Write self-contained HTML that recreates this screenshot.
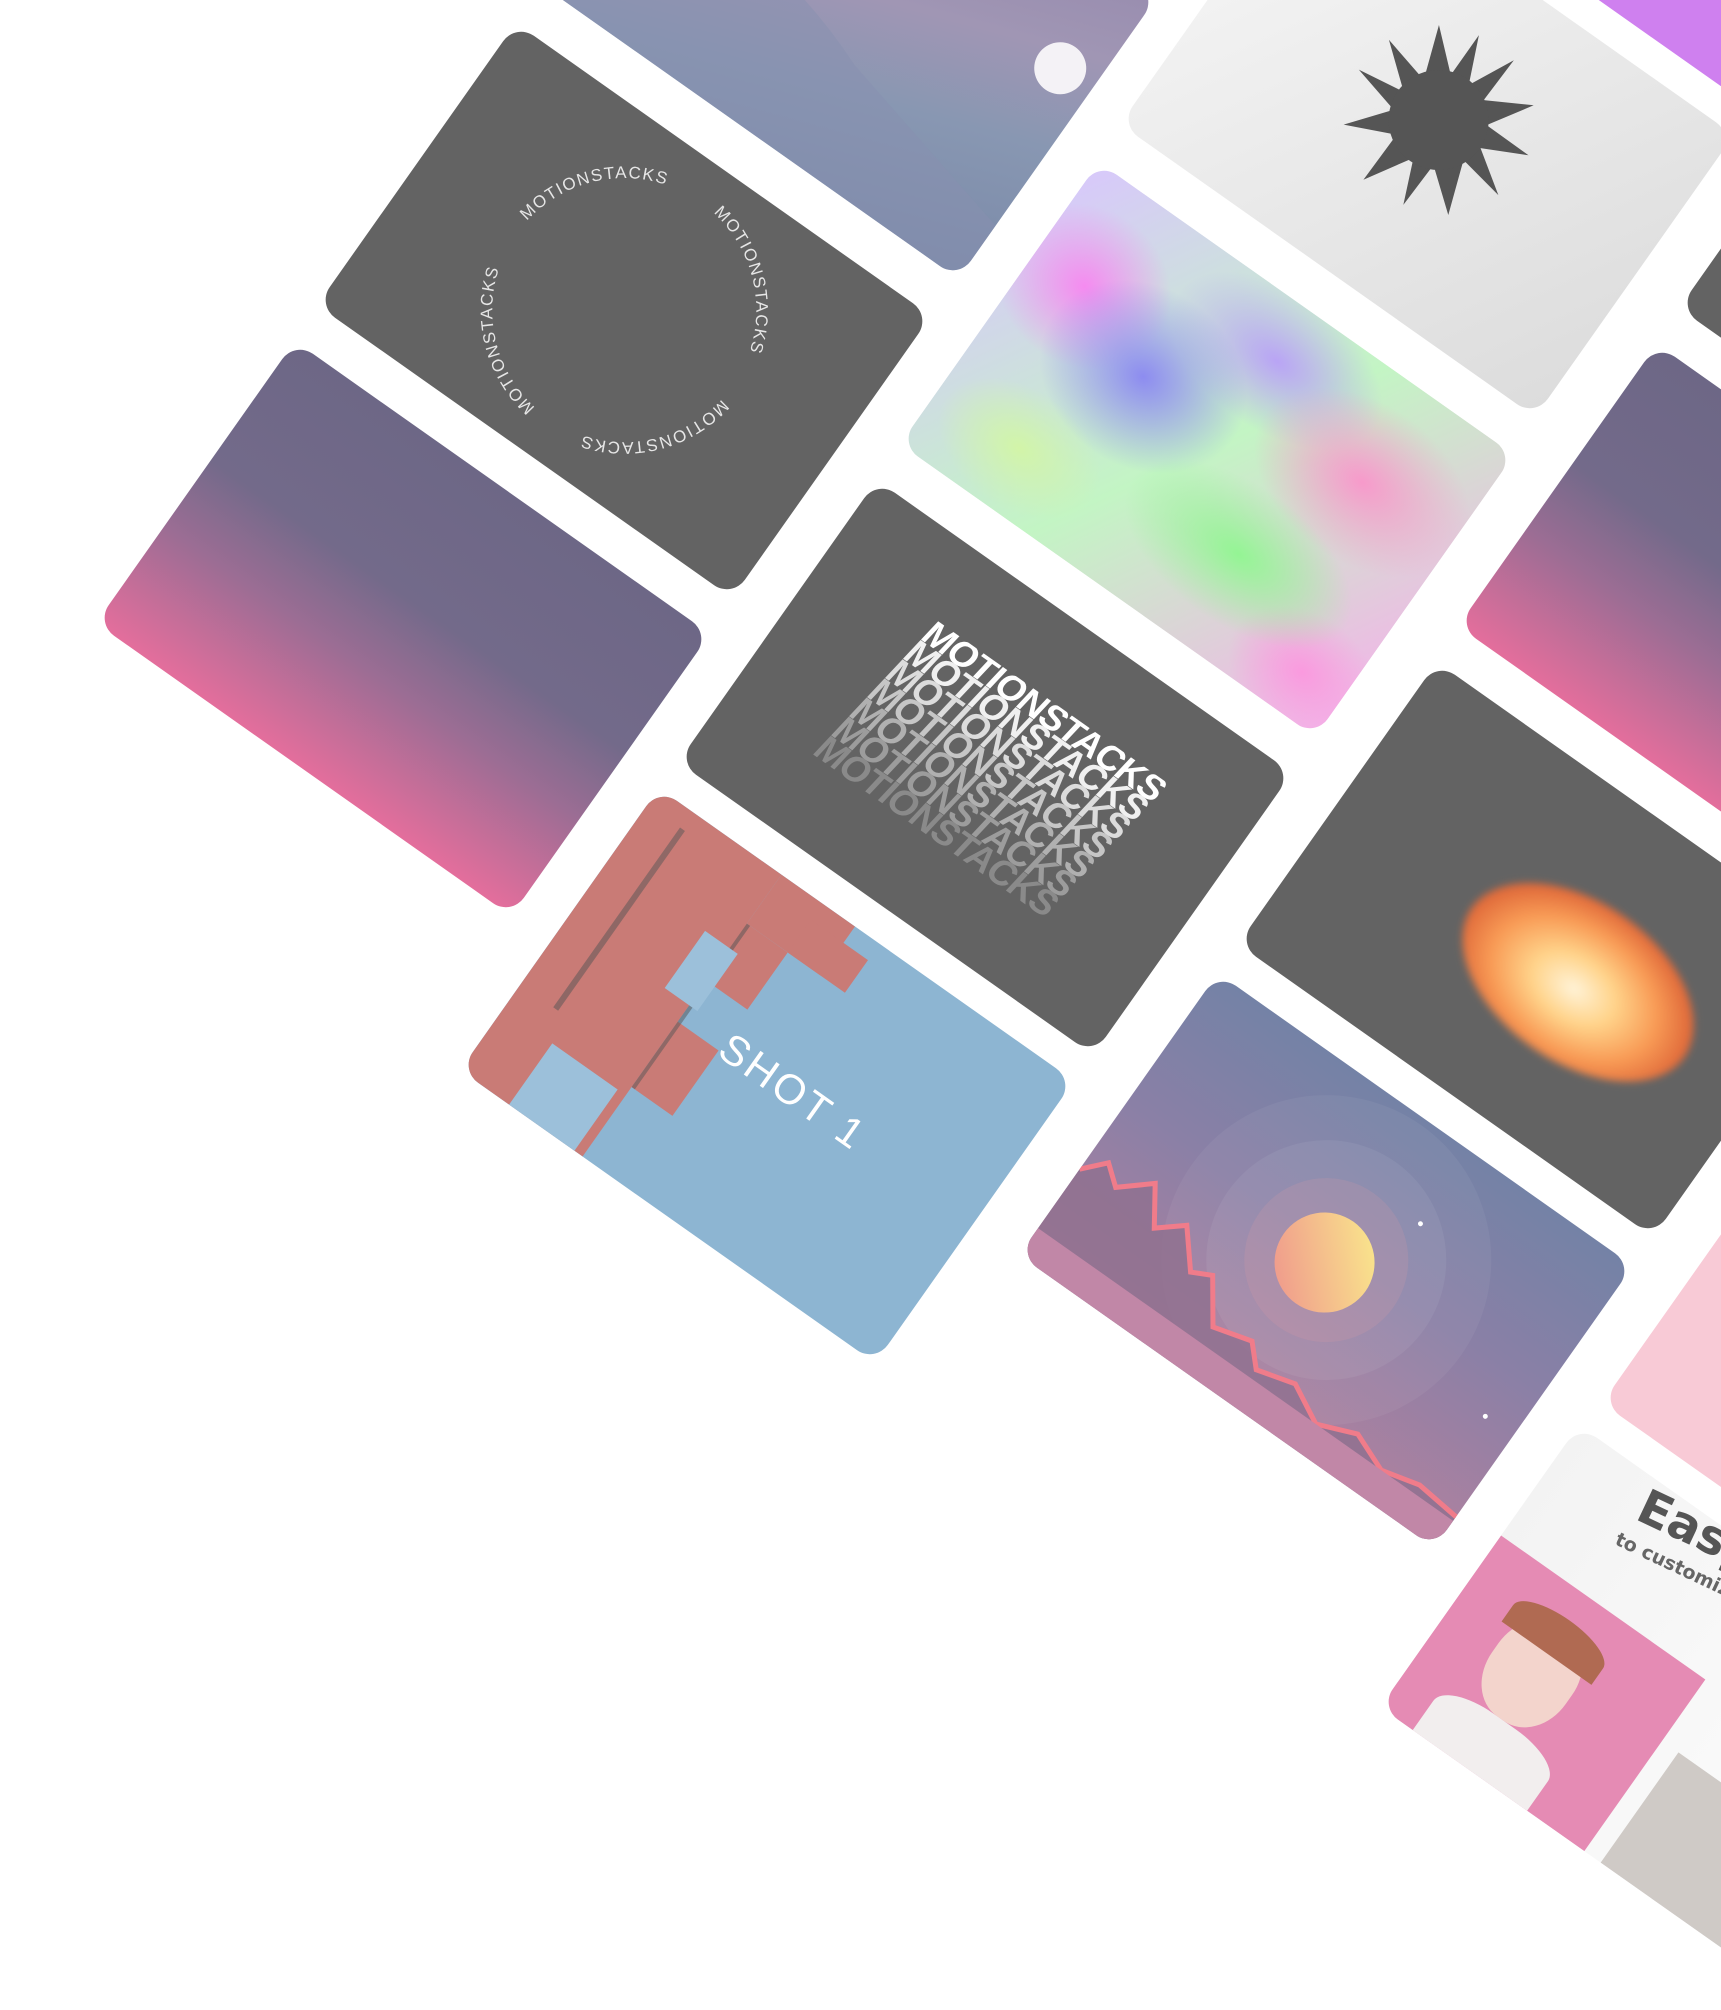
<!DOCTYPE html>
<html><head><meta charset="utf-8"><style>
html,body{margin:0;padding:0;width:1721px;height:2010px;overflow:hidden;background:#fff;font-family:"Liberation Sans",sans-serif}
.c{position:absolute;width:508px;height:345px;margin:-172.5px 0 0 -254px;transform:rotate(35.2deg);border-radius:22px;overflow:hidden}
.c svg{position:absolute;left:0;top:0;width:508px;height:345px}
.dark{background:#636363}
.pg{background:linear-gradient(180deg,#6d6786 0%,#736a8a 42%,#9c6d94 66%,#e46e9c 100%)}
</style></head><body>

<div class="c" style="left:850px;top:-9px;background:linear-gradient(160deg,#8a7aa6 0%,#a096b4 50%,#8897b2 70%,#7a89a8 100%)">
<svg viewBox="0 0 508 345"><path d="M0 210 Q150 170 300 230 L508 280 L508 345 L0 345Z" fill="#8790b0" opacity=".5"/><circle cx="470" cy="114" r="26" fill="#f4f2f6"/></svg></div>

<div class="c dark" style="left:624px;top:310px">
<svg viewBox="0 0 508 345"><defs><path id="cp" d="M254,172 m-132,0 a132,132 0 1,1 264,0 a132,132 0 1,1 -264,0"/></defs>
<g font-family="Liberation Sans" font-size="17" fill="#e6e6e6" letter-spacing="1.5">
<text><textPath href="#cp" startOffset="2%">MOTIONSTACKS</textPath></text>
<text><textPath href="#cp" startOffset="27%">MOTIONSTACKS</textPath></text>
<text><textPath href="#cp" startOffset="52%">MOTIONSTACKS</textPath></text>
<text><textPath href="#cp" startOffset="77%">MOTIONSTACKS</textPath></text></g></svg></div>

<div class="c pg" style="left:403px;top:628px"></div>

<div class="c dark" style="left:985px;top:767px">
<div style="position:absolute;left:115px;top:80px;width:300px;height:200px;overflow:hidden;transform:skewX(-8deg);font-weight:bold;font-size:37px;line-height:26px;letter-spacing:-1px">
<div style="color:#fff">MOTIONSTACKS</div><div style="color:#f0f0f0">MOTIONSTACKS</div><div style="color:#dcdcdc">MOTIONSTACKS</div><div style="color:#c6c6c6">MOTIONSTACKS</div><div style="color:#b0b0b0">MOTIONSTACKS</div><div style="color:#9c9c9c">MOTIONSTACKS</div><div style="color:#8a8a8a">MOTIONSTACKS</div>
</div></div>

<div class="c" style="left:767px;top:1075px;background:#8db5d2">
<svg viewBox="0 0 508 345"><g fill="#c97b76"><rect x="0" y="0" width="150" height="345"/><rect x="150" y="0" width="90" height="60"/><rect x="140" y="60" width="60" height="70"/><rect x="150" y="180" width="50" height="80"/><rect x="200" y="20" width="70" height="40"/></g>
<g fill="#555" opacity=".5"><rect x="40" y="20" width="6" height="220"/><rect x="150" y="60" width="4" height="200"/></g>
<g fill="#9cc0da"><rect x="120" y="90" width="40" height="70"/><rect x="60" y="270" width="80" height="78"/></g>
<text x="200" y="185" font-size="42" fill="#fff" font-family="Liberation Sans" letter-spacing="3">SHOT 1</text></svg></div>

<div class="c" style="left:1207px;top:449px;background:
radial-gradient(ellipse 110px 90px at 160px 150px,#8d8cf0,transparent),
radial-gradient(ellipse 130px 70px at 340px 240px,#94f594,transparent),
radial-gradient(ellipse 120px 80px at 400px 110px,#f79acb,transparent),
radial-gradient(ellipse 90px 80px at 60px 110px,#f58bf0,transparent),
radial-gradient(ellipse 120px 70px at 260px 60px,#b9a4f5,transparent),
radial-gradient(ellipse 90px 60px at 100px 280px,#d2f5a8,transparent),
radial-gradient(ellipse 80px 60px at 460px 300px,#fa9adf,transparent),
linear-gradient(120deg,#d8c8fb,#c3f5c4 50%,#f3b3e9)"></div>

<div class="c" style="left:1427px;top:129px;background:linear-gradient(120deg,#f6f6f6,#dcdcdc)">
<svg viewBox="0 0 508 345"><g transform="translate(258 158) rotate(-35)" fill="#555">
<polygon points="0,-95 12,-45 40,-85 30,-35 75,-60 45,-20 95,-15 48,5 90,35 42,28 60,75 25,40 10,95 -5,45 -35,85 -25,38 -75,60 -42,15 -95,5 -45,-10 -80,-50 -35,-28 -50,-80 -15,-40"/>
<circle r="50"/></g></svg></div>

<div class="c dark" style="left:1545px;top:949px">
<div style="position:absolute;left:170px;top:100px;width:260px;height:160px;border-radius:50%;background:radial-gradient(ellipse at 50% 55%,#fff3d8 0%,#ffd38a 25%,#f89a55 50%,#e06a3a 70%,transparent 78%);filter:blur(4px)"></div></div>

<div class="c" style="left:1326px;top:1260px;background:linear-gradient(180deg,#7482a6 0%,#8a80a6 45%,#b0819f 100%)">
<svg viewBox="0 0 508 345"><circle cx="254" cy="172" r="165" fill="#fff" opacity=".05"/><circle cx="254" cy="172" r="120" fill="#fff" opacity=".06"/><circle cx="254" cy="172" r="82" fill="#f0a0a0" opacity=".15"/>
<defs><linearGradient id="sg" x1="0" y1="1" x2="1" y2="0"><stop offset="0" stop-color="#ee8f8c"/><stop offset="1" stop-color="#fbf08c"/></linearGradient></defs>
<circle cx="254" cy="175" r="50" fill="url(#sg)"/>
<path d="M0 240 L20 218 L40 234 L70 208 L95 245 L120 224 L150 260 L170 250 L200 292 L240 281 L260 302 L300 291 L340 312 L380 296 L420 312 L460 302 L508 307 L508 345 L0 345Z" fill="#8f6f8e" opacity=".8"/>
<path d="M0 240 L20 218 L40 234 L70 208 L95 245 L120 224 L150 260 L170 250 L200 292 L240 281 L260 302 L300 291 L340 312 L380 296 L420 312 L460 302 L508 307" fill="none" stroke="#f07c8a" stroke-width="5"/>
<rect x="0" y="312" width="508" height="33" fill="#c187a7"/><circle cx="310" cy="88" r="2.5" fill="#fff"/><circle cx="474" cy="208" r="2.5" fill="#fff"/></svg></div>

<div class="c pg" style="left:1765px;top:631px"></div>
<div class="c dark" style="left:1986px;top:313px"></div>
<div class="c" style="left:1876px;top:-16px;background:#cf80ef"></div>
<div class="c" style="left:1909px;top:1408px;background:#f8cad6"></div>

<div class="c" style="left:1687px;top:1712px;background:linear-gradient(90deg,#f3f3f3,#fafafa 70%,#fff)">
<div style="position:absolute;left:95px;top:-10px;transform:rotate(-10deg);font-weight:bold;color:#555;font-size:48px;font-family:'DejaVu Sans',sans-serif">Easy</div>
<div style="position:absolute;left:95px;top:48px;transform:rotate(-10deg);font-weight:bold;color:#666;font-size:19px;font-family:'DejaVu Sans',sans-serif">to customize</div>
<div style="position:absolute;left:0;top:135px;width:250px;height:210px;background:#e58bb4"><div style="position:absolute;left:60px;top:40px;width:90px;height:110px;border-radius:45%;background:#f3d4cc"></div><div style="position:absolute;left:50px;top:30px;width:110px;height:40px;border-radius:50% 50% 0 0;background:#b06a52"></div><div style="position:absolute;left:40px;top:150px;width:140px;height:60px;background:#f2eeee;border-radius:40% 40% 0 0"></div></div>
<div style="position:absolute;left:270px;top:210px;width:238px;height:135px;background:#cfcac6"></div>
</div>

</body></html>
